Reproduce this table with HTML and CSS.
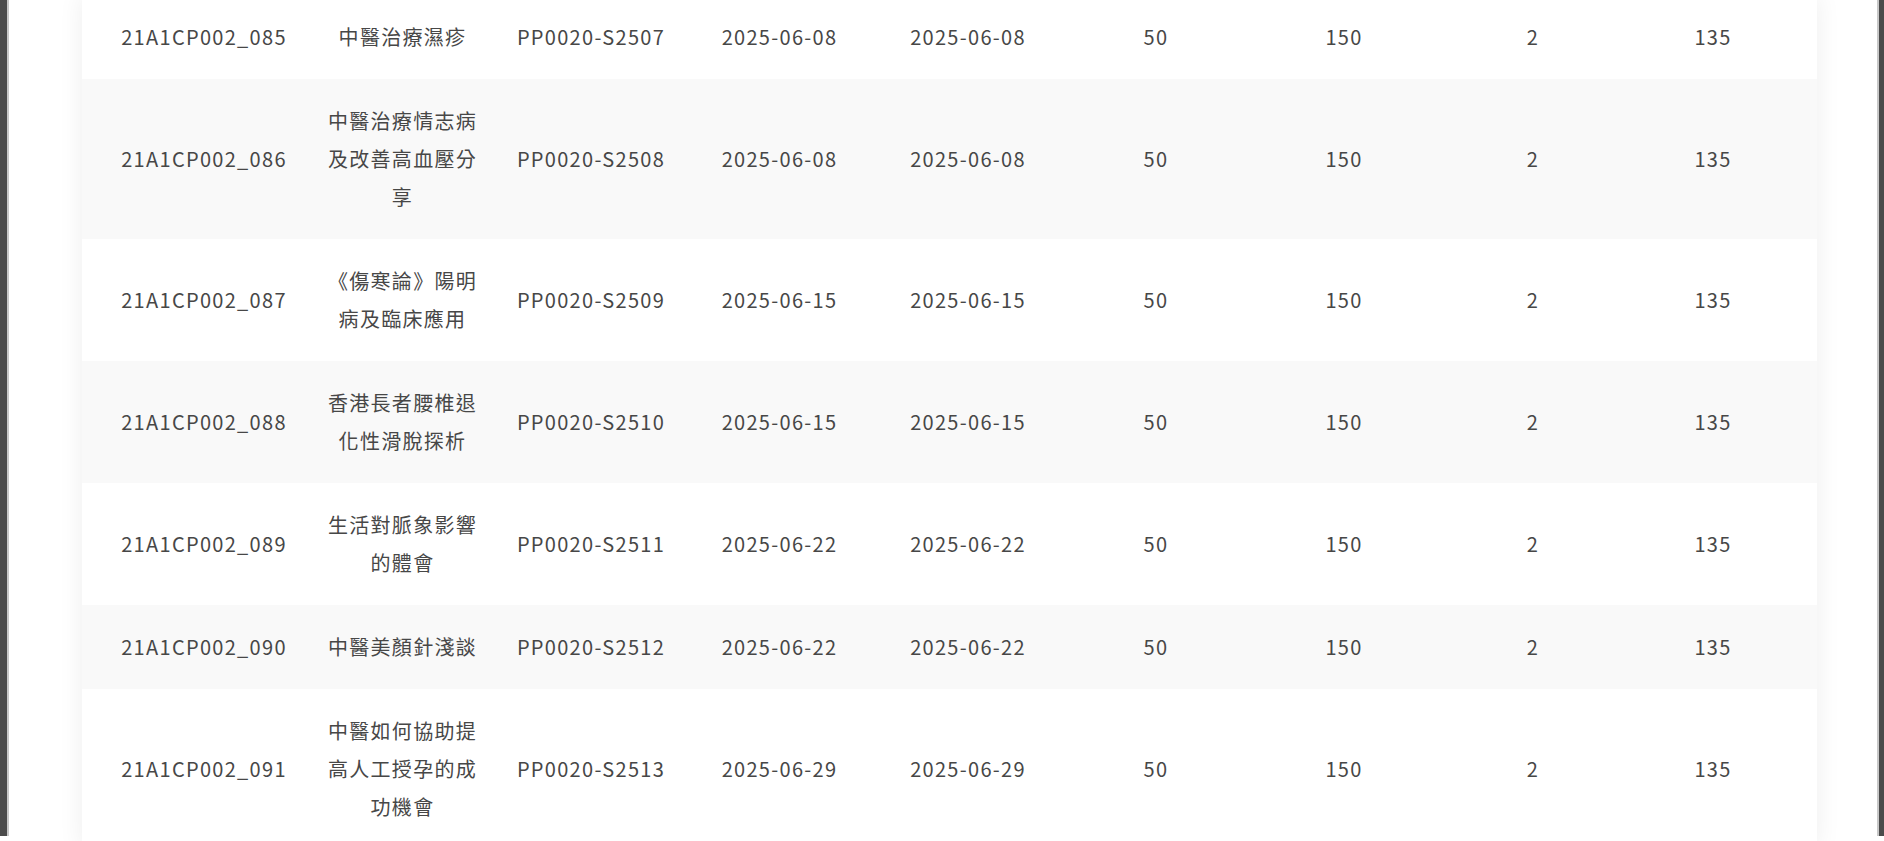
FILE: index.html
```html
<!DOCTYPE html>
<html lang="zh-Hant">
  <head>
    <meta charset="UTF-8" />
    <meta name="viewport" content="width=device-width, initial-scale=1.0" />
    <title>課程列表</title>
    <link rel="stylesheet" href="styles.css">
  </head>
  <body>
    <div class="frame">
      <div class="page">
        <div class="card">
          <table class="course-table">
            <colgroup>
              <col class="col-code" />
              <col class="col-title" />
              <col class="col-ref" />
              <col class="col-date" />
              <col class="col-date2" />
              <col class="col-num" />
              <col class="col-num" />
              <col class="col-num2" />
              <col class="col-last" />
            </colgroup>
            <tbody>
              <tr>
                <td class="code">21A1CP002_085</td>
                <td class="title">中醫治療濕疹</td>
                <td>PP0020-S2507</td>
                <td>2025-06-08</td>
                <td>2025-06-08</td>
                <td>50</td>
                <td>150</td>
                <td>2</td>
                <td class="last">135</td>
              </tr>
              <tr>
                <td class="code">21A1CP002_086</td>
                <td class="title">中醫治療情志病及改善高血壓分享</td>
                <td>PP0020-S2508</td>
                <td>2025-06-08</td>
                <td>2025-06-08</td>
                <td>50</td>
                <td>150</td>
                <td>2</td>
                <td class="last">135</td>
              </tr>
              <tr>
                <td class="code">21A1CP002_087</td>
                <td class="title">《傷寒論》陽明病及臨床應用</td>
                <td>PP0020-S2509</td>
                <td>2025-06-15</td>
                <td>2025-06-15</td>
                <td>50</td>
                <td>150</td>
                <td>2</td>
                <td class="last">135</td>
              </tr>
              <tr>
                <td class="code">21A1CP002_088</td>
                <td class="title">香港長者腰椎退化性滑脫探析</td>
                <td>PP0020-S2510</td>
                <td>2025-06-15</td>
                <td>2025-06-15</td>
                <td>50</td>
                <td>150</td>
                <td>2</td>
                <td class="last">135</td>
              </tr>
              <tr>
                <td class="code">21A1CP002_089</td>
                <td class="title">生活對脈象影響的體會</td>
                <td>PP0020-S2511</td>
                <td>2025-06-22</td>
                <td>2025-06-22</td>
                <td>50</td>
                <td>150</td>
                <td>2</td>
                <td class="last">135</td>
              </tr>
              <tr>
                <td class="code">21A1CP002_090</td>
                <td class="title">中醫美顏針淺談</td>
                <td>PP0020-S2512</td>
                <td>2025-06-22</td>
                <td>2025-06-22</td>
                <td>50</td>
                <td>150</td>
                <td>2</td>
                <td class="last">135</td>
              </tr>
              <tr>
                <td class="code">21A1CP002_091</td>
                <td class="title">中醫如何協助提高人工授孕的成功機會</td>
                <td>PP0020-S2513</td>
                <td>2025-06-29</td>
                <td>2025-06-29</td>
                <td>50</td>
                <td>150</td>
                <td>2</td>
                <td class="last">135</td>
              </tr>
            </tbody>
          </table>
        </div>
      </div>
    </div>
  </body>
</html>
```

FILE: styles.css
```css
html,
body {
  margin: 0;
  padding: 0;
  height: 100%;
  overflow: hidden;
  background-color: #ffffff;
}
body {
  font-family: "Noto Sans CJK TC", "Noto Sans", sans-serif;
  color: #474747;
}
.frame {
  height: 100%;
  border-left: 7px solid #4b4b4b;
  border-right: 5px solid #4b4b4b;
  box-sizing: border-box;
}
.page {
  height: 100%;
  border-left: 2px solid #c8c8c8;
  border-right: 2px solid #c8c8c8;
  padding: 0 60px 0 73px;
  box-sizing: border-box;
}
.card {
  margin-top: -5px;
  background-color: #fff;
  box-shadow: 0 0 24px rgba(0, 0, 0, 0.07);
}
.course-table {
  width: 100%;
  table-layout: fixed;
  border-collapse: collapse;
  font-size: 20px;
  letter-spacing: 1.3px;
}
.col-code {
  width: 221px;
}
.col-title {
  width: 194px;
}
.col-ref {
  width: 188px;
}
.col-date {
  width: 189px;
}
.col-date2,
.col-num {
  width: 188px;
}
.col-num2 {
  width: 190px;
}
.col-last {
  width: 189px;
}
.course-table td {
  padding: 23px 0;
  line-height: 38px;
  text-align: center;
  vertical-align: middle;
}
.course-table tr:nth-child(even) td {
  background-color: #f9f9f9;
}
.course-table td.code {
  padding-left: 23px;
}
.course-table td.title {
  padding-left: 23px;
  padding-right: 18px;
}
.course-table td.last {
  padding-right: 19px;
}
```
